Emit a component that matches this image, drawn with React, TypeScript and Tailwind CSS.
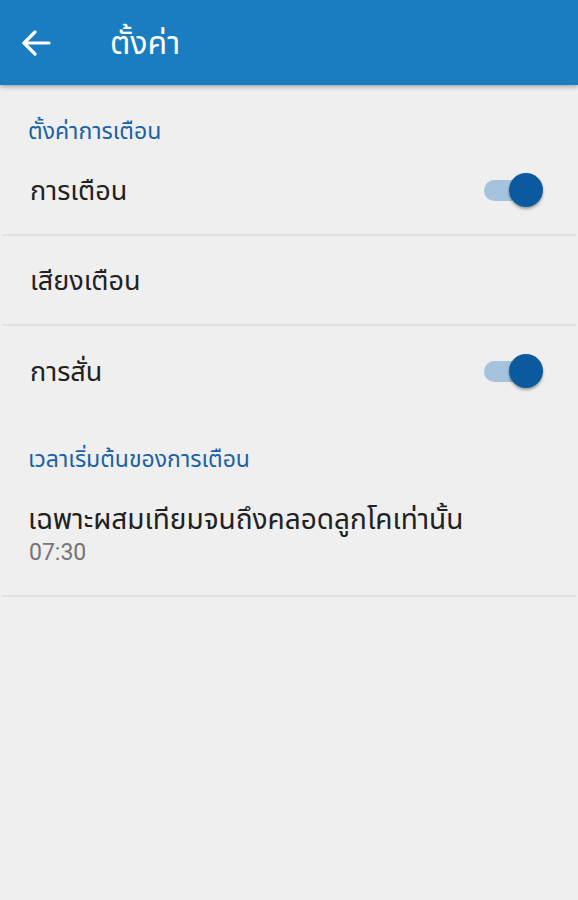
import React from "react";

const font = { fontFamily: 'Roboto, "Noto Sans", "Noto Sans Thai", "Liberation Sans", sans-serif' };

function Toggle() {
  return (
    <div className="relative w-[62px] h-[36px] flex items-center">
      <div className="ml-[2px] w-[46px] h-[21px] rounded-full bg-[#a5c3dd]" />
      <div className="absolute right-[1px] top-[1px] w-[34px] h-[34px] rounded-full bg-[#0b5aa0] shadow-[0_2px_3px_rgba(0,0,0,0.35)]" />
    </div>
  );
}

function Row({ label, toggle, divider }: { label: string; toggle?: boolean; divider?: boolean }) {
  return (
    <div className={"h-[90px] flex items-center justify-between pl-[28px] pr-[32px] mx-[2px] " + (divider ? "border-b-2 border-[#e2e2e2]" : "")}>
      <span className="text-[27px] text-[#212121] translate-y-[1px]">{label}</span>
      {toggle && <Toggle />}
    </div>
  );
}

export default function App() {
  return (
    <div className="w-[578px] h-[900px] bg-[#efefef] overflow-hidden" style={font}>
      <div className="h-[85px] bg-[#1a7cc1] flex items-center shadow-[0_2px_4px_rgba(0,0,0,0.3)] relative z-10">
        <div className="w-[110px] pl-[22px] flex items-center">
          <svg width="29" height="26" viewBox="0 0 29 26" fill="none" stroke="white" strokeWidth="3.2" strokeLinecap="round" strokeLinejoin="round">
            <path d="M2 13H27" />
            <path d="M13 2L2 13L13 24" />
          </svg>
        </div>
        <span className="text-[32px] text-white">ตั้งค่า</span>
      </div>
      <div className="pl-[28px] h-[61px] text-[23px] text-[#1a62a6] flex items-end">
        <span className="leading-[32px] -mb-[2px]">ตั้งค่าการเตือน</span>
      </div>
      <Row label="การเตือน" toggle divider />
      <Row label="เสียงเตือน" divider />
      <Row label="การสั่น" toggle />
      <div className="pl-[28px] h-[75px] text-[23px] text-[#1a62a6] flex items-center pt-[14px]">
        <span className="leading-[30px] -mt-[1px]">เวลาเริ่มต้นของการเตือน</span>
      </div>
      <div className="mx-[2px] h-[106px] pl-[26px] pt-[12px] border-b-2 border-[#e2e2e2] flex flex-col">
        <span className="text-[28px] text-[#212121] leading-[34px]">เฉพาะผสมเทียมจนถึงคลอดลูกโคเท่านั้น</span>
        <span className="text-[23px] text-[#757575] leading-[32px] pl-[1px]">07:30</span>
      </div>
    </div>
  );
}
